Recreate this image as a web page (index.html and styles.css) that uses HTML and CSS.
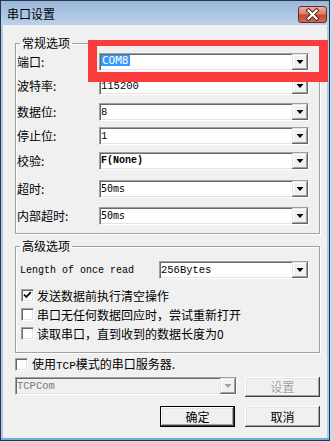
FILE: index.html
```html
<!DOCTYPE html>
<html lang="zh-cn">
<head>
    <meta charset="UTF-8">
    <title>串口设置</title>
    <link rel="stylesheet" href="styles.css">
</head>
<body>
    <div class="window">
        <div class="titlebar">
            <span class="title">串口设置</span>
            <span class="close">
                <svg width="27" height="15" viewBox="0 0 27 15">
                    <path d="M9.5 3.5 L17.5 11.5 M17.5 3.5 L9.5 11.5" stroke="#5b2a23" stroke-width="4.2" stroke-linecap="square"/>
                    <path d="M9.5 3.5 L17.5 11.5 M17.5 3.5 L9.5 11.5" stroke="#fff" stroke-width="2.2" stroke-linecap="square"/>
                </svg>
            </span>
        </div>

        <div class="client">
            <fieldset class="group group-basic">
                <legend>常规选项</legend>
                <div class="grid">
                    <label>端口:</label>
                    <div class="combo"><span class="val sans"><span class="sel">COM8</span></span><span class="drop"></span></div>
                    <label>波特率:</label>
                    <div class="combo"><span class="val">115200</span><span class="drop"></span></div>
                    <label>数据位:</label>
                    <div class="combo"><span class="val">8</span><span class="drop"></span></div>
                    <label>停止位:</label>
                    <div class="combo"><span class="val">1</span><span class="drop"></span></div>
                    <label>校验:</label>
                    <div class="combo"><span class="val bold">F(None)</span><span class="drop"></span></div>
                    <label>超时:</label>
                    <div class="combo"><span class="val sans">50ms</span><span class="drop"></span></div>
                    <label>内部超时:</label>
                    <div class="combo"><span class="val sans">50ms</span><span class="drop"></span></div>
                </div>
            </fieldset>

            <fieldset class="group group-adv">
                <legend>高级选项</legend>
                <div class="read-row">
                    <label class="mono">Length of once read</label>
                    <div class="combo combo-read"><span class="val">256Bytes</span><span class="drop"></span></div>
                </div>
                <div class="checks">
                    <div class="check-row">
                        <span class="check checked">
                            <svg width="11" height="11" viewBox="0 0 11 11"><path d="M2 4.5 L4.3 7 L8.8 2.2" fill="none" stroke="#000" stroke-width="1.8"/></svg>
                        </span>
                        <span>发送数据前执行清空操作</span>
                    </div>
                    <div class="check-row">
                        <span class="check"></span>
                        <span>串口无任何数据回应时，尝试重新打开</span>
                    </div>
                    <div class="check-row">
                        <span class="check"></span>
                        <span>读取串口，直到收到的数据长度为0</span>
                    </div>
                </div>
            </fieldset>

            <div class="check-row tcp-row">
                <span class="check"></span>
                <span>使用<span class="latin">TCP</span>模式的串口服务器.</span>
            </div>

            <div class="tcp-bar">
                <div class="combo combo-tcp disabled"><span class="val">TCPCom</span><span class="drop"></span></div>
                <span class="btn btn-set disabled">设置</span>
            </div>

            <div class="actions">
                <span class="btn btn-ok">确定</span>
                <span class="btn">取消</span>
            </div>
        </div>
    </div>

    <div class="mark"></div>
</body>
</html>
```

FILE: styles.css
```css
body {
    margin: 0;
    position: relative;
    background: #c6daee;
    font: 12px "Noto Sans CJK SC", sans-serif;
    color: #000;
}
.window {
    width: 330px;
    height: 441px;
    box-sizing: border-box;
    border: 1px solid #26374b;
    background: #aecbe9;
    box-shadow: inset 0 -2px #62b4e4;
    padding: 0 2px 2px;
    display: flex;
    flex-direction: column;
}
.titlebar {
    height: 24px;
    margin: 0 -2px;
    padding: 0 2px 0 6px;
    display: flex;
    align-items: center;
    justify-content: space-between;
    background: linear-gradient(#9bb7da, #bad1eb);
}
.title {
    font-size: 12px;
    line-height: 14px;
    padding-top: 1px;
}
.close {
    display: flex;
    width: 27px;
    height: 15px;
    border: 1px solid #6a2c24;
    border-radius: 3px;
    background: linear-gradient(#eab0a4, #d98069 45%, #c44a33 55%, #d06a52);
    margin-top: 2px;
}
.client {
    flex: 1;
    background: #f0f0f0;
    padding: 11px 0 0 12px;
}

/* group boxes */
.group {
    width: 305px;
    box-sizing: border-box;
    margin: 0;
    border: 1px solid #a0a0a0;
    box-shadow: inset 1px 1px #fff, 1px 1px #fff;
}
.group legend {
    padding: 0 2px;
    line-height: 14px;
}
.group-basic {
    padding: 3px 0 8px 1px;
}
.group-basic legend {
    margin-left: 3px;
}
.group-adv {
    margin-top: 5px;
    padding: 8px 0 12px 4px;
}
.grid {
    display: grid;
    grid-template-columns: 82px 210px;
    grid-template-rows: 24px 26px 24px 25px 28px 27px 18px;
    align-items: start;
}
.grid label {
    line-height: 18px;
}

/* combo boxes */
.combo {
    display: flex;
    height: 18px;
    box-sizing: border-box;
    background: #fff;
    border: 1px solid;
    border-color: #a0a0a0 #fff #fff #a0a0a0;
    box-shadow: inset 1px 1px #696969, inset -1px -1px #e3e3e3;
}
.val {
    flex: 1;
    padding-left: 1px;
    font: 10.5px/16px "Liberation Mono", monospace;
    white-space: nowrap;
}
.val.sans {
    font: 10px/16px "DejaVu Sans Mono", monospace;
}
.val.bold {
    font-size: 10px;
    font-weight: bold;
}
.sel {
    display: inline-block;
    background: #3399ff;
    color: #fff;
    font-size: 11px;
    line-height: 11px;
    padding: 0 1px;
    vertical-align: 1px;
}
.drop {
    width: 16px;
    height: 16px;
    display: flex;
    align-items: center;
    justify-content: center;
    background: #f0f0f0;
    box-shadow: inset -1px -1px #696969, inset 1px 1px #e3e3e3, inset -2px -2px #a0a0a0, inset 2px 2px #fff;
}
.drop::before {
    content: "";
    width: 7px;
    height: 4px;
    background: #000;
    clip-path: polygon(0 0, 100% 0, 50% 100%);
}
.combo.disabled {
    background: #f0f0f0;
}
.combo.disabled .val {
    color: #7a7a7a;
}
.combo.disabled .drop::before {
    background: #a0a0a0;
}

.read-row {
    display: flex;
    align-items: center;
}
.mono {
    width: 139px;
    font: 10px "Liberation Mono", monospace;
}
.combo-read {
    width: 150px;
}

/* checkboxes */
.checks {
    margin-top: 10px;
    display: flex;
    flex-direction: column;
    gap: 6px;
}
.check-row {
    display: flex;
    align-items: center;
    gap: 3px;
    height: 13px;
    line-height: 13px;
    white-space: nowrap;
}
.checks .check-row {
    margin-left: 1px;
}
.check {
    width: 13px;
    height: 13px;
    box-sizing: border-box;
    display: flex;
    align-items: center;
    justify-content: center;
    background: #fff;
    border: 1px solid;
    border-color: #a0a0a0 #fff #fff #a0a0a0;
    box-shadow: inset 1px 1px #696969, inset -1px -1px #e3e3e3;
}
.tcp-row {
    margin-top: 5px;
    gap: 4px;
}
.latin {
    font: 11px "Liberation Mono", monospace;
}

.tcp-bar {
    width: 305px;
    margin-top: 6px;
    display: flex;
    align-items: flex-start;
    gap: 8px;
}
.combo-tcp {
    width: 222px;
}

/* buttons */
.btn {
    width: 75px;
    height: 21px;
    box-sizing: border-box;
    display: flex;
    align-items: center;
    justify-content: center;
    background: #f0f0f0;
    box-shadow: inset -1px -1px #404040, inset 1px 1px #fff, inset -2px -2px #a0a0a0, inset 2px 2px #e3e3e3;
    line-height: 14px;
}
.btn-set {
    height: 20px;
}
.btn.disabled {
    color: #a0a0a0;
    text-shadow: 1px 1px #fff;
}
.btn-ok {
    border: 1px solid #000;
}
.actions {
    width: 305px;
    margin-top: 9px;
    display: flex;
    justify-content: flex-end;
    gap: 10px;
}

/* red annotation box */
.mark {
    position: absolute;
    left: 88px;
    top: 40px;
    width: 240px;
    height: 42px;
    box-sizing: border-box;
    border: 9px solid #fa3b3b;
    border-top-width: 6px;
    border-bottom-width: 10px;
}
```
